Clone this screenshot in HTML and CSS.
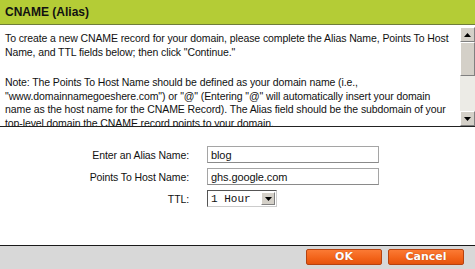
FILE: index.html
```html
<!DOCTYPE html>
<html>
<head>
<meta charset="utf-8">
<link rel="stylesheet" href="styles.css">
</head>
<body>
<div class="dialog">
  <div class="header">CNAME (Alias)</div>
  <div class="terms">
    <div class="terms-text">
      <p>To create a new CNAME record for your domain, please complete the Alias Name, Points To Host Name, and TTL fields below; then click "Continue."</p>
      <p class="note">Note: The Points To Host Name should be defined as your domain name (i.e., "www.domainnamegoeshere.com") or "@" (Entering "@" will automatically insert your domain name as the host name for the CNAME Record). The Alias field should be the subdomain of your top-level domain the CNAME record points to your domain.</p>
    </div>
    <div class="scrollbar">
      <div class="sb-btn"><svg width="7" height="4" viewBox="0 0 7 4"><path d="M0 4 L3.5 0 L7 4 Z" fill="#000"/></svg></div>
      <div class="sb-thumb"></div>
      <div class="sb-track"></div>
      <div class="sb-btn"><svg width="7" height="4" viewBox="0 0 7 4"><path d="M0 0 L7 0 L3.5 4 Z" fill="#000"/></svg></div>
    </div>
  </div>
  <div class="form">
    <label class="lbl">Enter an Alias Name:</label>
    <div class="field">blog</div>
    <label class="lbl">Points To Host Name:</label>
    <div class="field">ghs.google.com</div>
    <label class="lbl">TTL:</label>
    <div class="select">
      <span class="sel-val">1 Hour</span>
      <span class="sel-btn"><svg width="7" height="4" viewBox="0 0 7 4"><path d="M0 0 L7 0 L3.5 4 Z" fill="#000"/></svg></span>
    </div>
  </div>
  <div class="footer">
    <button class="btn btn-ok">OK</button>
    <button class="btn btn-cancel">Cancel</button>
  </div>
</div>
</body>
</html>
```
FILE: styles.css
```css
html, body {
  margin: 0;
  padding: 0;
  background: #fff;
}
.dialog {
  width: 475px;
  height: 269px;
  display: flex;
  flex-direction: column;
  font-family: "Liberation Sans", Arial, sans-serif;
  color: #111;
  overflow: hidden;
}
.header {
  height: 24px;
  line-height: 24px;
  background: #b4cc36;
  border-bottom: 1px solid #6f7d3a;
  padding-left: 5px;
  font-weight: bold;
  font-size: 12px;
  color: #111;
}
.terms {
  margin-top: 2px;
  height: 99px;
  display: flex;
  border-bottom: 1px solid #222;
  overflow: hidden;
}
.terms-text {
  flex: 1;
  padding: 5px 0 0 5px;
  font-size: 10.5px;
  letter-spacing: -0.1px;
  line-height: 13.5px;
  overflow: hidden;
}
.terms-text p {
  margin: 0;
}
.terms-text p.note {
  margin-top: 17px;
}
.scrollbar {
  width: 15px;
  margin-left: 4px;
  display: flex;
  flex-direction: column;
  background: #eeeeee;
}
.sb-btn {
  height: 15px;
  box-sizing: border-box;
  background: #d4d0c8;
  border: 1px solid;
  border-color: #fff #808080 #808080 #fff;
  display: flex;
  align-items: center;
  justify-content: center;
}
.sb-thumb {
  height: 34px;
  box-sizing: border-box;
  background: #d4d0c8;
  border: 1px solid;
  border-color: #fff #808080 #808080 #fff;
}
.sb-track {
  flex: 1;
  background: #ecebe6;
}
.form {
  display: grid;
  grid-template-columns: 189px 172px;
  column-gap: 18px;
  row-gap: 5px;
  align-items: center;
  padding-top: 19px;
  font-size: 10.5px;
  letter-spacing: -0.1px;
}
.lbl {
  text-align: right;
  color: #111;
}
.field {
  height: 17px;
  box-sizing: border-box;
  border: 1px solid #a5a5a5;
  border-bottom-color: #8a8a8a;
  padding: 1px 0 0 3px;
  line-height: 14px;
  font-size: 11px;
}
.select {
  width: 70px;
  height: 17px;
  box-sizing: border-box;
  border: 1px solid #555;
  border-right-color: #ccc;
  border-bottom-color: #ccc;
  display: flex;
  align-items: center;
  justify-content: space-between;
  padding-left: 3px;
}
.sel-val {
  font-family: "Liberation Mono", "Courier New", monospace;
  font-size: 11px;
  letter-spacing: 0;
}
.sel-btn {
  width: 14px;
  height: 13px;
  margin-right: 1px;
  box-sizing: border-box;
  background: #d4d0c8;
  border: 1px solid;
  border-color: #fff #808080 #808080 #fff;
  display: flex;
  align-items: center;
  justify-content: center;
}
.footer {
  margin-top: auto;
  height: 20px;
  border-top: 1px solid #1a1a1a;
  background: #d8d8d8;
  display: flex;
  justify-content: flex-end;
  align-items: flex-start;
  gap: 6px;
  padding: 3px 11px 0 0;
}
.btn {
  width: 76px;
  height: 16px;
  padding: 0;
  border: 1px solid #b5420f;
  border-radius: 2px;
  background: linear-gradient(#fb7a34, #f26218 60%, #e5530d);
  color: #fff;
  font-family: "DejaVu Sans", Verdana, sans-serif;
  font-weight: bold;
  font-size: 11px;
  line-height: 14px;
  text-shadow: 0 0 1px #a63a08;
}
```
